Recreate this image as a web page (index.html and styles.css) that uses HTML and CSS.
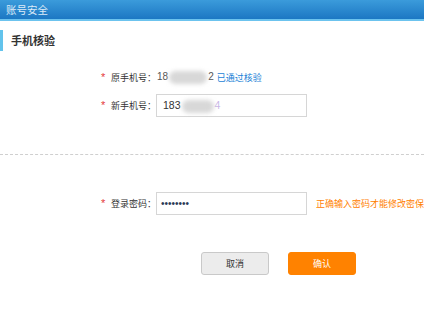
FILE: index.html
```html
<!DOCTYPE html>
<html lang="zh-CN">
<head>
  <meta charset="UTF-8" />
  <title>账号安全</title>
  <link rel="stylesheet" href="styles.css">
</head>
<body>
  <div class="header">账号安全</div>

  <h3 class="title">手机核验</h3>

  <div class="form">
    <div class="row">
      <span class="label"><i class="star">*</i>原手机号：</span>
      <span class="value">18<span class="blur blur-a"></span>2</span>
      <span class="passed">已通过核验</span>
    </div>
    <div class="row">
      <span class="label"><i class="star">*</i>新手机号：</span>
      <div class="input">183<span class="blur blur-b"></span><span class="faint">4</span></div>
    </div>
  </div>

  <div class="divider"></div>

  <div class="form">
    <div class="row">
      <span class="label"><i class="star">*</i>登录密码：</span>
      <div class="input input-pwd"><span class="dots">••••••••</span></div>
      <span class="hint">正确输入密码才能修改密保</span>
    </div>
  </div>

  <div class="actions">
    <button class="btn btn-cancel">取消</button>
    <button class="btn btn-ok">确认</button>
  </div>
</body>
</html>
```

FILE: styles.css
```css
body { margin: 0; font-family: "Noto Sans CJK SC", "Liberation Sans", sans-serif; font-size: 9px; color: #333; overflow: hidden; white-space: nowrap; }
.header { height: 19px; line-height: 19px; padding-left: 6px; font-size: 10.5px; color: #dcebf8; background: linear-gradient(#3b9bdb, #1c77c3); border-bottom: 2px solid #6cc3ee; }
.title { margin: 9px 0 0; height: 21px; line-height: 21px; padding-left: 8px; border-left: 3px solid #62c3ec; font-size: 11px; font-weight: bold; color: #333; }
.form { margin: 15px 0 0 100px; display: flex; flex-direction: column; gap: 5px; }
.row { display: flex; align-items: center; height: 23px; }
.label { width: 56px; flex-shrink: 0; color: #333; }
.star { font-style: normal; font-size: 11px; font-family: "Liberation Sans", sans-serif; color: #e4393c; display: inline-block; width: 11px; padding-left: 1px; box-sizing: border-box; }
.value { font-family: "Liberation Sans", sans-serif; font-size: 10px; color: #555; padding-left: 1px; }
.blur { display: inline-block; height: 13px; vertical-align: middle; background: #d8d8d8; border-radius: 7px; filter: blur(2px); }
.blur-a { width: 38px; margin: 0 1px; }
.blur-b { width: 32px; margin: 0 1px; }
.faint { color: #c9b6e6; }
.passed { margin-left: 3px; color: #1a7fd6; }
.input { width: 143px; height: 21px; line-height: 21px; padding-left: 6px; border: 1px solid #d6d6d6; font-family: "Liberation Sans", sans-serif; font-size: 10.5px; color: #333; }
.input-pwd { width: 146px; padding-left: 4px; }
.dots { font-size: 10px; color: #2a3a55; }
.hint { margin-left: 9px; color: #ff8000; }
.divider { margin-top: 37px; border-top: 1px dashed #cfcfcf; }
.form + .divider + .form { margin-top: 37px; }
.actions { margin: 37px 0 0 201px; display: flex; gap: 19px; }
.btn { width: 68px; height: 23px; border-radius: 3px; font-family: "Noto Sans CJK SC", sans-serif; font-size: 9px; padding: 0; cursor: pointer; }
.btn-cancel { background: #ececec; border: 1px solid #c9c9c9; color: #333; }
.btn-ok { background: #ff8200; border: 1px solid #ff8200; color: #fff; }
```
